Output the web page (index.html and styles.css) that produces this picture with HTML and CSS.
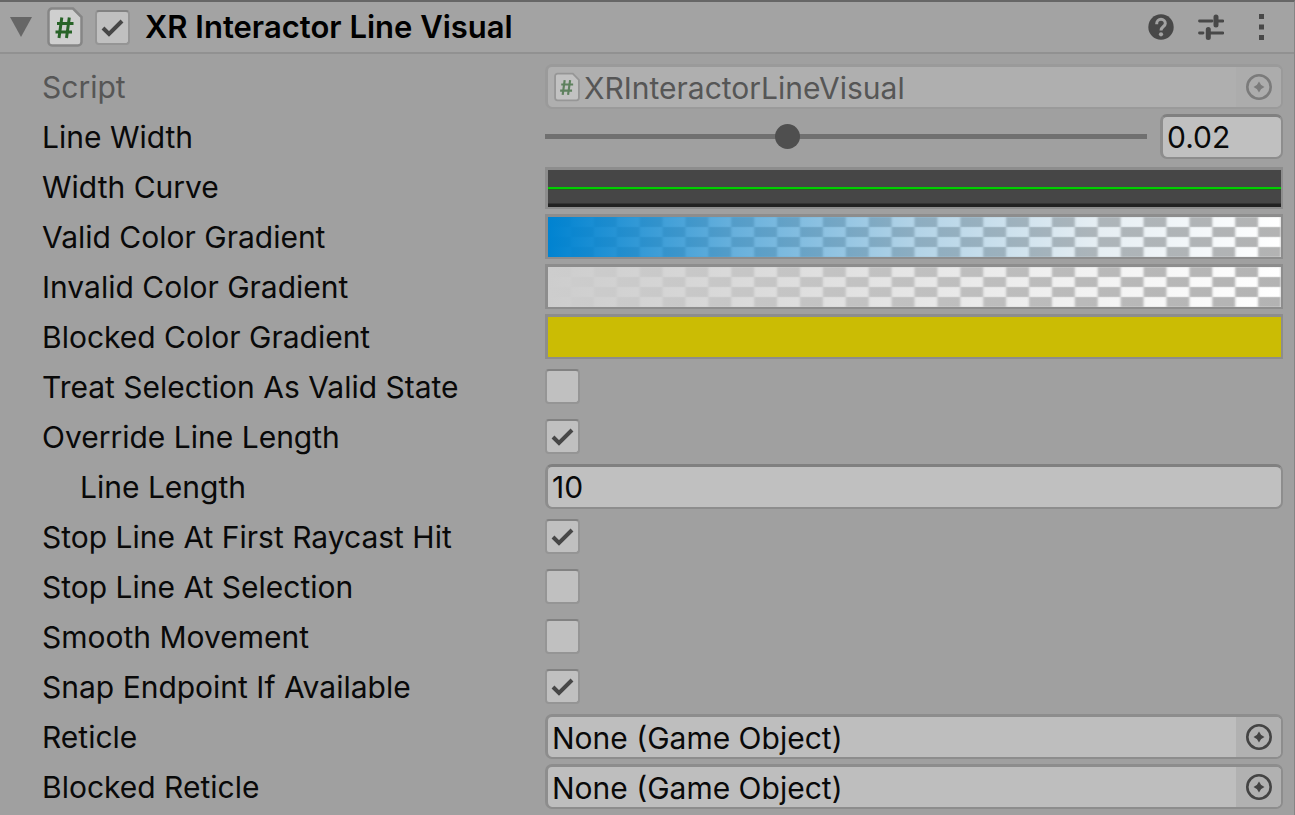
FILE: index.html
```html
<!DOCTYPE html>
<html lang="en">
<head>
    <meta charset="UTF-8">
    <meta name="viewport" content="width=device-width, initial-scale=1.0">
    <title>XR Interactor Line Visual</title>
    <link rel="stylesheet" href="styles.css">
</head>
<body>
    <!-- Shared icons -->
    <svg class="sprite" aria-hidden="true">
        <symbol id="icon-script" viewBox="0 0 36 40">
            <path d="M5 1.500h21L34.500 10v25a3.500 3.500 0 0 1-3.500 3.500H5A3.500 3.500 0 0 1 1.500 35V5A3.500 3.500 0 0 1 5 1.500z" fill="#cfcfcf" stroke="#868686" stroke-width="2.500"/>
            <path d="M14.800 10.500L12 31M22.300 10.500L19.500 31M10 16.500h16.500M8.500 25H25" fill="none" stroke="#286328" stroke-width="3"/>
        </symbol>
        <symbol id="icon-picker" viewBox="0 0 28 28">
            <circle cx="14" cy="14" r="11.700" fill="none" stroke="currentColor" stroke-width="2.600"/>
            <path d="M14 10l1.500 2.500L18 14l-2.500 1.500L14 18l-1.500-2.500L10 14l2.500-1.500z" fill="currentColor" stroke="currentColor" stroke-width="1.500"/>
        </symbol>
    </svg>

    <main class="inspector">
        <header class="component-header">
            <button class="foldout" type="button" aria-label="Collapse" aria-expanded="true">
                <svg width="24" height="22" viewBox="0 0 24 22"><path d="M1 1h22L12 21z" fill="#666"/></svg>
            </button>
            <svg class="script-icon"><use href="#icon-script"/></svg>
            <input class="toggle" type="checkbox" id="enabled" checked>
            <label class="title" for="enabled">XR Interactor Line Visual</label>
            <div class="header-actions">
                <button type="button" aria-label="Help">
                    <svg width="26" height="26" viewBox="0 0 26 26">
                        <circle cx="13" cy="13" r="12.700" fill="#484848"/>
                        <path d="M8.700 10.200V9.500A4.300 4.300 0 0 1 17.300 9.500C17.300 12.500 13 12.600 13 16.500" fill="none" stroke="#a2a2a2" stroke-width="3"/>
                        <circle cx="13" cy="20.300" r="2.100" fill="#a2a2a2"/>
                    </svg>
                </button>
                <button type="button" aria-label="Presets">
                    <svg width="26" height="26" viewBox="0 0 26 26" fill="none" stroke="#484848" stroke-linecap="round">
                        <path d="M1.500 7H14M20 7h5M1.500 19H5M12 19h13" stroke-width="2.800"/>
                        <path d="M18 3v8M10.300 15.500v8" stroke-width="5"/>
                    </svg>
                </button>
                <button type="button" aria-label="More">
                    <svg width="26" height="26" viewBox="0 0 26 26" fill="#484848"><path d="M11 0h5v5h-5zM11 10.500h5v5h-5zM11 21h5v5h-5z"/></svg>
                </button>
            </div>
        </header>

        <form class="properties">
            <div class="row disabled">
                <label for="script">Script</label>
                <div class="object-field">
                    <svg class="field-icon"><use href="#icon-script"/></svg>
                    <input id="script" type="text" value="XRInteractorLineVisual" disabled>
                    <button type="button" aria-label="Select script" disabled><svg><use href="#icon-picker"/></svg></button>
                </div>
            </div>
            <div class="row">
                <label for="line-width">Line Width</label>
                <div class="slider-field">
                    <input class="slider" id="line-width" type="range" min="0.0001" max="0.05" step="any" value="0.02">
                    <input class="text-field" type="text" value="0.02" aria-label="Line Width value">
                </div>
            </div>
            <div class="row">
                <label for="width-curve">Width Curve</label>
                <button class="curve" id="width-curve" type="button"></button>
            </div>
            <div class="row">
                <label for="valid-gradient">Valid Color Gradient</label>
                <button class="gradient gradient-valid" id="valid-gradient" type="button"></button>
            </div>
            <div class="row">
                <label for="invalid-gradient">Invalid Color Gradient</label>
                <button class="gradient gradient-invalid" id="invalid-gradient" type="button"></button>
            </div>
            <div class="row">
                <label for="blocked-gradient">Blocked Color Gradient</label>
                <button class="gradient gradient-blocked" id="blocked-gradient" type="button"></button>
            </div>
            <div class="row">
                <label for="treat-selection">Treat Selection As Valid State</label>
                <input class="toggle" id="treat-selection" type="checkbox">
            </div>
            <div class="row">
                <label for="override-length">Override Line Length</label>
                <input class="toggle" id="override-length" type="checkbox" checked>
            </div>
            <div class="row">
                <label class="indent" for="line-length">Line Length</label>
                <input class="text-field" id="line-length" type="text" value="10">
            </div>
            <div class="row">
                <label for="stop-raycast">Stop Line At First Raycast Hit</label>
                <input class="toggle" id="stop-raycast" type="checkbox" checked>
            </div>
            <div class="row">
                <label for="stop-selection">Stop Line At Selection</label>
                <input class="toggle" id="stop-selection" type="checkbox">
            </div>
            <div class="row">
                <label for="smooth">Smooth Movement</label>
                <input class="toggle" id="smooth" type="checkbox">
            </div>
            <div class="row">
                <label for="snap">Snap Endpoint If Available</label>
                <input class="toggle" id="snap" type="checkbox" checked>
            </div>
            <div class="row">
                <label for="reticle">Reticle</label>
                <div class="object-field">
                    <input id="reticle" type="text" value="None (Game Object)">
                    <button type="button" aria-label="Select reticle"><svg><use href="#icon-picker"/></svg></button>
                </div>
            </div>
            <div class="row">
                <label for="blocked-reticle">Blocked Reticle</label>
                <div class="object-field">
                    <input id="blocked-reticle" type="text" value="None (Game Object)">
                    <button type="button" aria-label="Select blocked reticle"><svg><use href="#icon-picker"/></svg></button>
                </div>
            </div>
        </form>
    </main>
</body>
</html>
```

FILE: styles.css
```css
* {
    box-sizing: border-box;
}
body {
    margin: 0;
    background-color: #a0a0a0;
    color: #090909;
    font-family: Inter, sans-serif;
    font-size: 30px;
    font-optical-sizing: none;
    line-height: 40px;
}
button, input {
    margin: 0;
    padding: 0;
    border: 0;
    background: none;
    color: inherit;
    font: inherit;
    font-optical-sizing: none;
}
svg {
    display: block;
}
.sprite {
    position: absolute;
    width: 0;
    height: 0;
}
.inspector {
    min-height: 100vh;
    border-top: 2px solid #666;
    border-right: 1px solid #858585;
}

/* Header */
.component-header {
    display: flex;
    align-items: center;
    height: 52px;
    padding: 0 20px 0 9px;
    background-color: #a3a3a3;
    border-bottom: 2px solid #919191;
}
.script-icon {
    width: 36px;
    height: 40px;
    margin: 0 12px 0 14px;
}
.title {
    margin-left: 15px;
    color: #000;
    font-size: 31px;
    font-weight: 600;
}
.header-actions {
    display: flex;
    gap: 24px;
    margin-left: auto;
}

/* Property rows */
.properties {
    display: grid;
    gap: 5px;
    padding: 10px 11px 5px 42px;
}
.row {
    display: grid;
    grid-template-columns: 503px minmax(0, 1fr);
    align-items: center;
    height: 45px;
}
.indent {
    padding-left: 38px;
}
.text-field, .object-field {
    width: 100%;
    height: 45px;
    border: 3px solid #8d8d8d;
    border-right-width: 2px;
    border-bottom-width: 2px;
    border-radius: 7px;
    background-color: #c0c0c0;
}
.text-field {
    padding-left: 4px;
    border-top-color: #808080;
}
.object-field {
    display: flex;
    align-items: center;
    overflow: hidden;
    background-color: #bebebe;
}
.object-field input {
    flex: 1;
    min-width: 0;
    height: 40px;
    padding: 2px 0 0 4px;
}
.object-field button {
    display: flex;
    align-items: center;
    justify-content: center;
    width: 45px;
    height: 40px;
    background-color: #b1b1b1;
    color: #444;
}
.object-field button svg {
    width: 28px;
    height: 28px;
}
.field-icon {
    width: 26px;
    height: 30px;
    margin-left: 6px;
    opacity: 0.6;
}
.disabled label, .disabled input {
    color: #565656;
}
.disabled .object-field {
    border-color: #9a9a9a;
    background-color: #afafaf;
}
.disabled .object-field button {
    background-color: #acacac;
    color: #7b7b7b;
}

/* Checkbox */
.toggle {
    appearance: none;
    width: 35px;
    height: 35px;
    border: 2px solid #959595;
    border-top-color: #828282;
    border-radius: 4px;
    background: #c0c0c0 center / 31px 31px no-repeat;
}
.toggle:checked {
    background-image: url("data:image/svg+xml,%3Csvg xmlns='http://www.w3.org/2000/svg' viewBox='0 0 31 31'%3E%3Cpath d='M6 16l6 6L25 9' fill='none' stroke='%23474747' stroke-width='4'/%3E%3C/svg%3E");
}

/* Slider */
.slider-field {
    display: grid;
    grid-template-columns: minmax(0, 1fr) 123px;
    gap: 13px;
    align-items: center;
}
.slider {
    appearance: none;
    width: 100%;
    height: 25px;
    background: linear-gradient(#707070, #707070) center / 100% 5px no-repeat;
}
.slider::-webkit-slider-thumb {
    appearance: none;
    width: 25px;
    height: 25px;
    border-radius: 50%;
    background-color: #4f4f4f;
}

/* Curve and gradient previews */
.curve, .gradient {
    width: 100%;
    height: 45px;
    border: 3px solid #8d8d8d;
    border-bottom-width: 2px;
    border-right-width: 2px;
}
.curve {
    align-self: end;
    height: 42px;
    background: linear-gradient(#464646 17px, #00cf00 17px, #00cf00 19px, #2b5a28 19px, #2b5a28 20px, #464646 20px, #464646 33px, #222 34px) padding-box;
}
/* Layers: color fade, soft tile edges (x, y), checkerboard */
.gradient {
    --edge-x: linear-gradient(90deg, #d9d9d9cc, #d9d9d900 2px, #d9d9d900 calc(100% - 2px), #d9d9d9cc);
    --edge-y: linear-gradient(#d9d9d999, #d9d9d900 1px, #d9d9d900 calc(100% - 1px), #d9d9d999);
    --checker: conic-gradient(#fff 25%, #b3b3b3 0 50%, #fff 0 75%, #b3b3b3 0);
    background-size: 100% 100%, 3.125% 10px, 3.125% 10px, 6.25% 20px;
    background-origin: padding-box;
    background-clip: padding-box;
}
.gradient-valid {
    background-image: linear-gradient(90deg, #0083d1, #3395d0bf 25%, #67a8cf80 50%, #9abbce40 75%, #cdcdcd00), var(--edge-x), var(--edge-y), var(--checker);
}
.gradient-invalid {
    background-image: linear-gradient(90deg, #cdcdcd, #cdcdcd00), var(--edge-x), var(--edge-y), var(--checker);
}
.gradient-blocked {
    background-color: #cbbc04;
}
```
